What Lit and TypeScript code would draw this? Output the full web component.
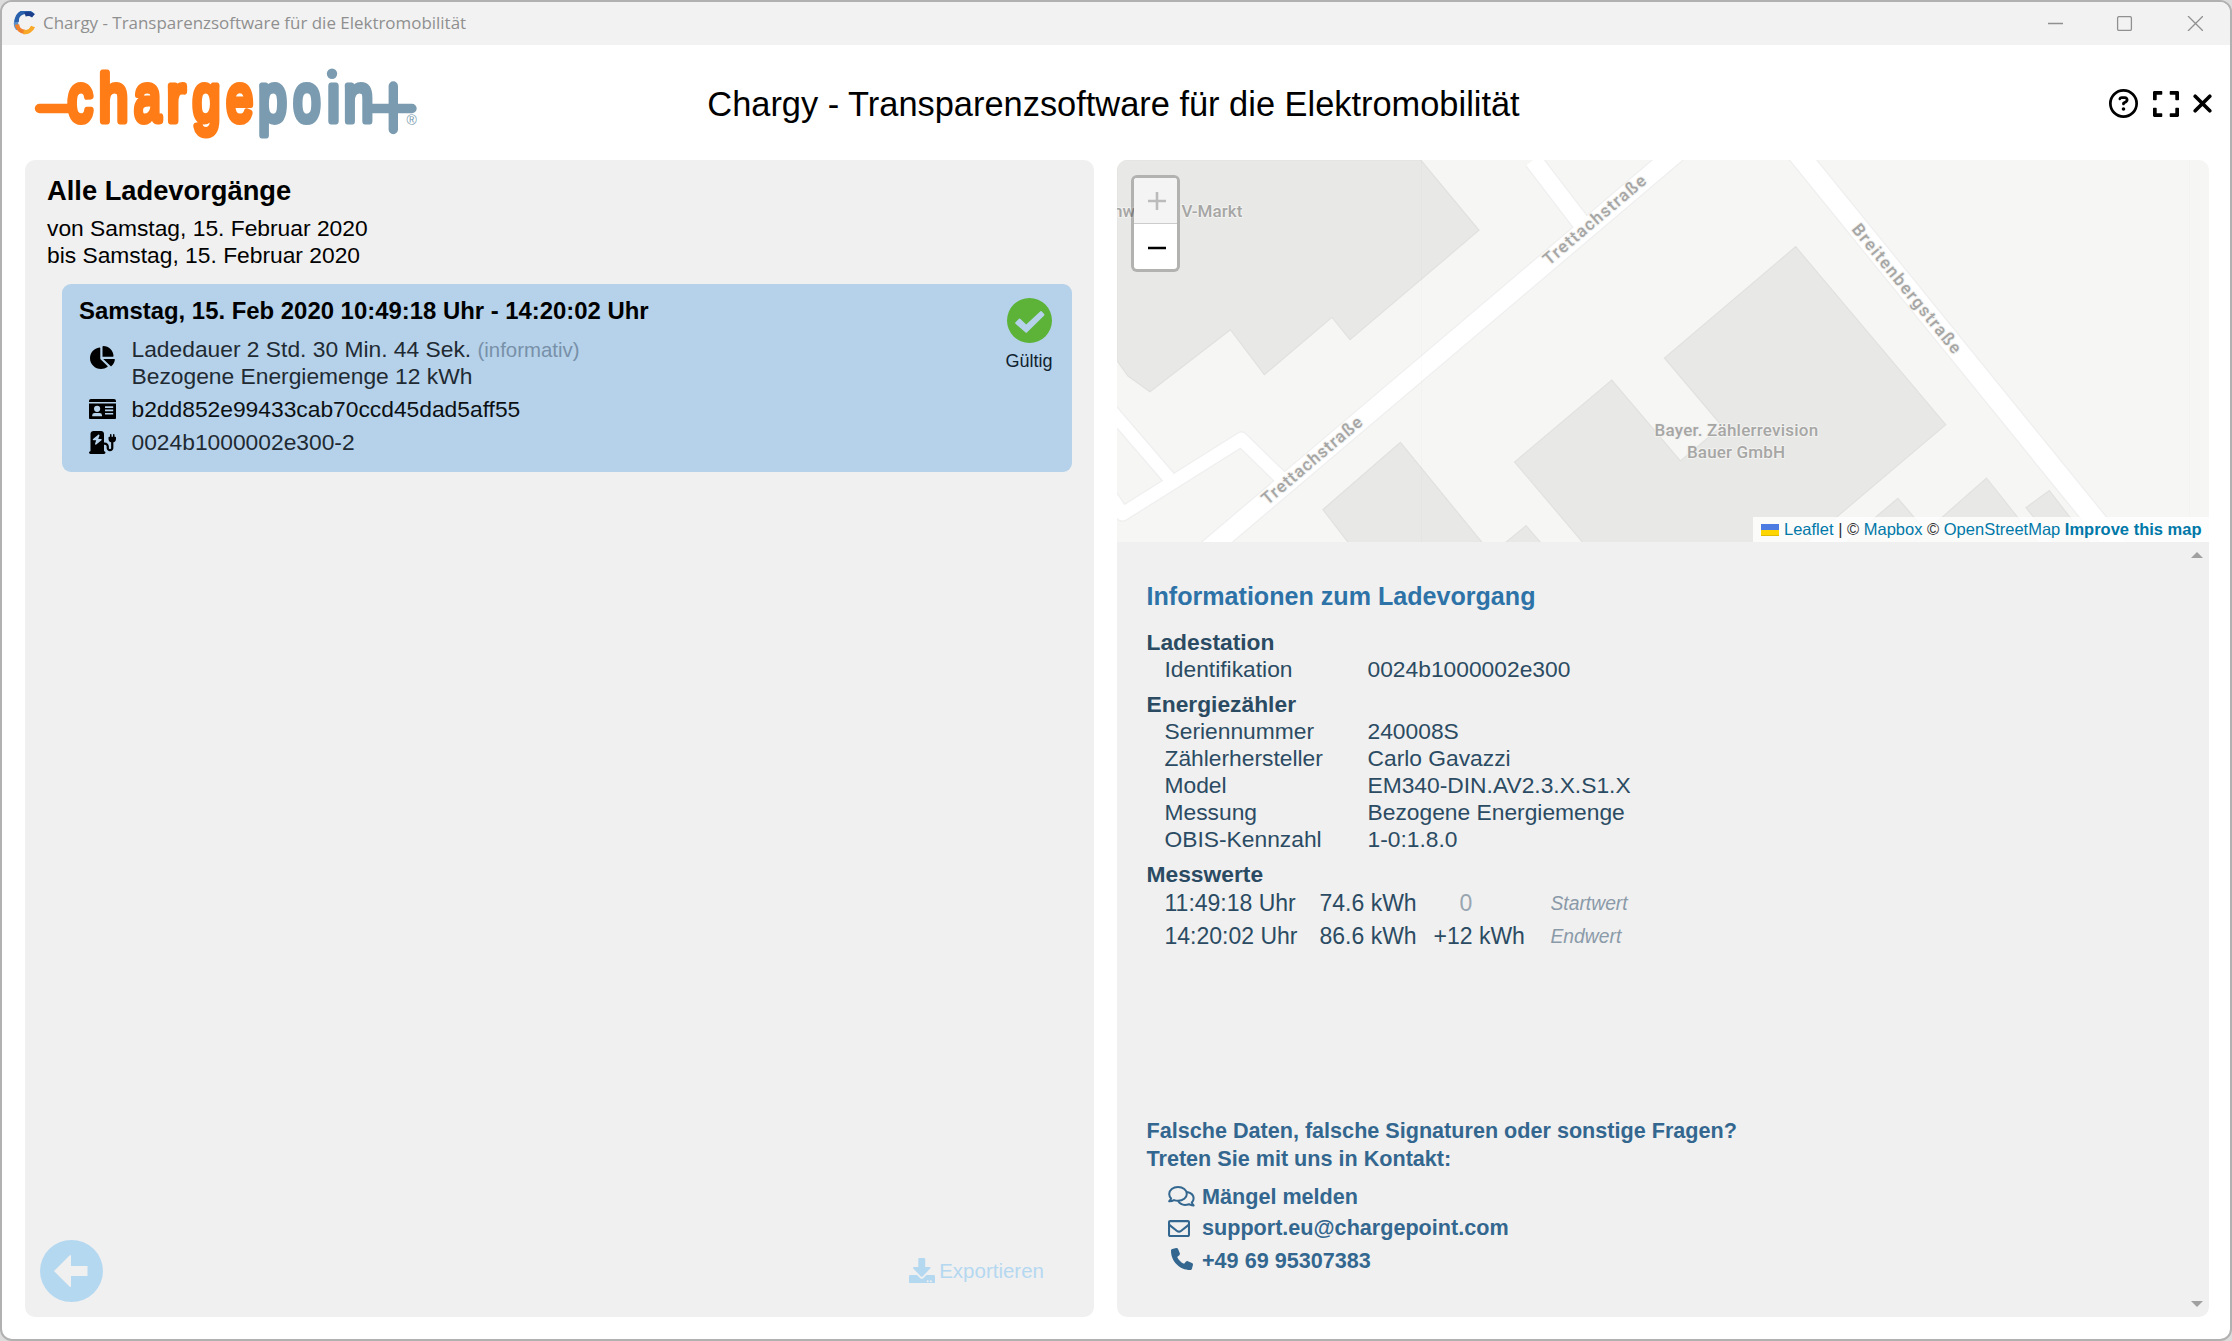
import { LitElement, html, svg, css } from "lit";
import { customElement } from "lit/decorators.js";

const icon = (cls: string, box: string, d: string) => html`
  <svg class=${cls} viewBox=${box} preserveAspectRatio="none" aria-hidden="true"><path d=${d} fill="currentColor" fill-rule="evenodd"></path></svg>`;

const ICONS = {
  help: "M464 256A208 208 0 1 0 48 256a208 208 0 1 0 416 0zM0 256a256 256 0 1 1 512 0A256 256 0 1 1 0 256zm169.8-90.7c7.9-22.3 29.1-37.3 52.8-37.3h58.3c34.9 0 63.1 28.3 63.1 63.1c0 22.6-12.1 43.5-31.7 54.8L280 264.4c-.2 13-10.9 23.6-24 23.6c-13.3 0-24-10.7-24-24V250.5c0-8.6 4.6-16.5 12.1-20.8l44.3-25.4c4.7-2.7 7.6-7.7 7.6-13.1c0-8.4-6.8-15.1-15.1-15.1H222.6c-3.4 0-6.4 2.1-7.5 5.3l-.4 1.2c-4.4 12.5-18.2 19-30.6 14.6s-19-18.2-14.6-30.6l.4-1.2zM224 352a32 32 0 1 1 64 0 32 32 0 1 1 -64 0z",
  expand: "M0 180V56c0-13.3 10.7-24 24-24h124c6.6 0 12 5.4 12 12v40c0 6.6-5.4 12-12 12H64v84c0 6.6-5.4 12-12 12H12c-6.6 0-12-5.4-12-12zM288 44v40c0 6.6 5.4 12 12 12h84v84c0 6.6 5.4 12 12 12h40c6.6 0 12-5.4 12-12V56c0-13.3-10.7-24-24-24H300c-6.6 0-12 5.4-12 12zm148 276h-40c-6.6 0-12 5.4-12 12v84h-84c-6.6 0-12 5.4-12 12v40c0 6.6 5.4 12 12 12h124c13.3 0 24-10.7 24-24V332c0-6.6-5.4-12-12-12zM160 468v-40c0-6.6-5.4-12-12-12H64v-84c0-6.6-5.4-12-12-12H12c-6.6 0-12 5.4-12 12v124c0 13.3 10.7 24 24 24h124c6.6 0 12-5.4 12-12z",
  pie: "M304 240V16.6c0-9 7-16.6 16-16.6C443.7 0 544 100.3 544 224c0 9-7.6 16-16.6 16H304zM32 272C32 150.7 122.1 50.3 239 34.3c9.2-1.3 17 6.1 17 15.4V288L412.5 444.5c6.7 6.7 6.2 17.7-1.5 23.1C371.8 495.6 323.8 512 272 512C139.5 512 32 404.6 32 272zm526.4 16c9.3 0 16.6 7.8 15.4 17c-7.7 55.9-34.6 105.6-73.9 142.3c-6 5.6-15.4 5.2-21.2-.7L320 288H558.4z",
  idCard: "M2 0H25Q27 0 27 2V3H0V2Q0 0 2 0ZM0 4.6H27V18.5Q27 20.5 25 20.5H2Q0 20.5 0 18.5ZM5 9.8a3.1 3.1 0 1 0 6.2 0a3.1 3.1 0 1 0-6.2 0ZM3.2 17.2H13V16.2Q13 14 10.5 14H5.7Q3.2 14 3.2 16.2ZM16 7.3H24.2V8.9H16ZM16 10.6H24.2V12.2H16ZM16 13.9H24.2V15.5H16Z",
  station: "M96 0C60.7 0 32 28.7 32 64V448c-17.7 0-32 14.3-32 32s14.3 32 32 32H320c17.7 0 32-14.3 32-32s-14.3-32-32-32V304h16c22.1 0 40 17.9 40 40v32c0 39.8 32.2 72 72 72s72-32.2 72-72V252.3c32.5-10.2 56-40.5 56-76.3V144c0-8.8-7.2-16-16-16H544V80c0-8.8-7.2-16-16-16s-16 7.2-16 16v48H480V80c0-8.8-7.2-16-16-16s-16 7.2-16 16v48H432c-8.8 0-16 7.2-16 16v32c0 35.8 23.5 66.1 56 76.3V376c0 13.3-10.7 24-24 24s-24-10.7-24-24V344c0-48.6-39.4-88-88-88H320V64c0-35.3-28.7-64-64-64H96zM216.9 82.7c6 4 8.5 11.5 6.3 18.3l-25 74.9H256c6.7 0 12.7 4.2 15 10.4s.5 13.3-4.6 17.7l-112 96c-5.5 4.7-13.4 5.1-19.3 1.1s-8.5-11.5-6.3-18.3l25-74.9H96c-6.7 0-12.7-4.2-15-10.4s-.5-13.3 4.6-17.7l112-96c5.5-4.7 13.4-5.1 19.3-1.1z",
  mail: "M464 64H48C21.49 64 0 85.49 0 112v288c0 26.51 21.49 48 48 48h416c26.51 0 48-21.49 48-48V112c0-26.51-21.49-48-48-48zm0 48v40.805c-22.422 18.259-58.168 46.651-134.587 106.49-16.841 13.247-50.201 45.072-73.413 44.701-23.208.375-56.579-31.459-73.413-44.701C106.18 199.465 70.425 171.067 48 152.805V112h416zM48 400V214.398c22.914 18.251 55.409 43.862 104.938 82.646 21.857 17.205 60.134 55.186 103.062 54.955 42.717.231 80.509-37.199 103.053-54.947 49.528-38.783 82.032-64.401 104.947-82.653V400H48z",
  phone: "M164.9 24.6c-7.7-18.6-28-28.5-47.4-23.2l-88 24C12.1 30.2 0 46 0 64C0 311.4 200.6 512 448 512c18 0 33.8-12.1 38.6-29.5l24-88c5.3-19.4-4.6-39.7-23.2-47.4l-96-40c-16.3-6.8-35.2-2.1-46.3 11.6L304.7 368C234.3 334.7 177.3 277.7 144 207.3L193.3 167c13.7-11.2 18.4-30 11.6-46.3l-40-96z",
  back: "M0 31.5a31.5 31 0 1 0 63 0a31.5 31 0 1 0-63 0ZM14 31.5L29.5 16Q31 14.8 31 17V26.5H47.5V36.5H31V46Q31 48.5 29.5 47Z",
  download: "M9.3 1Q9.3 0 10.3 0H15.2Q16.2 0 16.2 1V9H20.6Q22.2 9.2 21.2 10.6L13.6 18.4Q12.8 19 12 18.4L4.3 10.6Q3.3 9.2 5 9H9.3ZM1.3 17H8L11.2 20.2Q12.8 21.4 14.3 20.2L17.5 17H24.6Q26 17 26 18.4V24.2Q26 25.6 24.6 25.6H1.3Q0 25.6 0 24.2V18.4Q0 17 1.3 17ZM17.7 23.2a1 1 0 1 0 2 0a1 1 0 1 0-2 0ZM20.9 23.2a1 1 0 1 0 2 0a1 1 0 1 0-2 0Z",
  check: "M0 22.5a22.5 22.5 0 1 0 45 0a22.5 22.5 0 1 0-45 0ZM8.3 24.5L12 20.8Q12.6 20.4 13.2 20.8L19.2 26.6L33.4 13.2Q34 12.8 34.6 13.2L37.2 16Q37.6 16.8 37.2 17.4L19.9 34.6Q19.2 35.2 18.6 34.6L8.3 25.6Q7.9 25 8.3 24.5Z",
};

const BUILDINGS = [
  "1117,160 1420.7,160 1479,230.3 1350,339.7 1332,317.3 1264.3,374.7 1230.4,329.7 1150,391.7 1128,376 1117,360.7",
  "1400.4,442.3 1482.5,543 1348.6,543 1322.9,509.7",
  "1505,543 1526,525.7 1541,543",
  "1795.7,246.7 1945.7,424.7 1806,543 1583.2,543 1514.6,462 1611.8,380 1680.4,461 1722,426 1664.4,358",
  "1845,543 1897.9,498.3 1936,543",
  "1913,543 1986.5,478 2038,543",
  "2049.3,490.7 2090,543 2055,543 2026,507.7",
];

const ROADS = [
  { d: "M1533 160L1585 228", w: 17 },
  { d: "M1107 406L1169 478", w: 12.5 },
  { d: "M1105 488L1122.5 514L1241.4 439.3L1283 480", w: 13 },
  { d: "M1205.7 551.7L1679.5 150", w: 18.8 },
  { d: "M1795 150L2121 551.7", w: 20 },
];

// Letter, left and right ink edges in the logo, left and right ink edges in font units.
const WORD: [string, number, number, number, number][] = [
  ["c", 67, 94.5, 80, 1005],
  ["h", 99.7, 127.3, 135, 1003],
  ["a", 133.5, 161.3, 74, 1052],
  ["r", 167.7, 188.8, 133, 710],
  ["g", 191.7, 219.3, 66, 1000],
  ["e", 225.7, 253.3, 75, 1055],
  ["p", 259.2, 287.3, 135, 1067],
  ["o", 292.7, 321.3, 68, 1071],
  ["ı", 326.8, 337.2, 136, 316],
  ["n", 344.7, 372.3, 135, 1002],
];

@customElement("charge-logo")
class ChargeLogo extends LitElement {
  static styles = css`
    :host { display: block; }
    svg { display: block; width: 400px; height: 110px; overflow: visible; }
    .word { font: 67px "Liberation Sans", Arial, sans-serif; stroke-width: 7; stroke-linejoin: round; }
    .orange { fill: #ff7c16; stroke: #ff7c16; }
    .blue { fill: #7b9cb0; stroke: #7b9cb0; }
    .bar { stroke-width: 9.4; stroke-linecap: round; }
    .reg { font: 14px "Liberation Sans", Arial, sans-serif; fill: #7b9cb0; }
  `;
  render() {
    const unit = 67 / 2048;
    const stroke = 7;
    return html`<svg viewBox="30 50 400 110" role="img" aria-label="chargepoint">
      <path class="bar orange" d="M39.5 108.5H70"></path>
      ${WORD.map(([ch, x0, x1, min, max], i) => {
        const sx = (x1 - x0) / ((max - min) * unit + stroke);
        const tx = x0 + (stroke / 2 - min * unit) * sx;
        return svg`<text class="word ${i < 6 ? "orange" : "blue"}" transform="translate(${tx} 121.300) scale(${sx} 1)">${ch}</text>`;
      })}
      <circle cx="332" cy="73.8" r="5.2" fill="#7b9cb0"></circle>
      <path class="bar blue" fill="none" d="M370 108.5H412M393.3 86V129.5"></path>
      <text class="reg" x="406.5" y="124.5">®</text>
    </svg>`;
  }
}

@customElement("station-map")
class StationMap extends LitElement {
  static styles = css`
    :host { display: block; position: relative; height: 382px; overflow: hidden; border-radius: 10px 10px 0 0; background: #f6f6f4; }
    .canvas { display: block; width: 1092px; height: 382px; }
    .building { fill: #e8e8e6; stroke: #e1e1df; stroke-width: 1.2; }
    .edge { fill: none; stroke: #eeefee; stroke-linejoin: round; }
    .road { fill: none; stroke: #fff; stroke-linejoin: round; }
    .label { font: 500 17px Roboto, sans-serif; fill: #a6a6a5; stroke: #f2f2f0; stroke-width: 2; paint-order: stroke; stroke-linejoin: round; }
    .seam { stroke: #000; stroke-opacity: 0.012; }
    .zoom { position: absolute; left: 14px; top: 15px; width: 43px; height: 91px; border: 3px solid rgba(0, 0, 0, 0.23); border-radius: 6px; background: #fff; background-clip: padding-box; display: flex; flex-direction: column; overflow: hidden; }
    .zoom svg { display: block; width: 43px; height: 45px; }
    .zoom .off { background: #f4f4f4; border-bottom: 1px solid #ccc; color: #bbb; }
    .credit { position: absolute; right: 0; bottom: 0; height: 25px; width: 448px; padding-left: 8px; display: flex; align-items: center; background: rgba(255, 255, 255, 0.8); font: 16.5px/25px "Liberation Sans", Arial, sans-serif; color: #333; }
    .credit a { color: #0078a8; }
    .credit b { font-weight: 700; }
    .flag { width: 18px; height: 12px; margin-right: 5px; flex: none; }
    .sources { white-space: nowrap; }
  `;
  render() {
    return html`
      <svg class="canvas" viewBox="1117 160 1092 382">
        ${BUILDINGS.map((p) => svg`<polygon class="building" points=${p}></polygon>`)}
        ${ROADS.map((r) => svg`<path class="edge" d=${r.d} stroke-width=${r.w + 2.5}></path>`)}
        ${ROADS.map((r) => svg`<path class="road" d=${r.d} stroke-width=${r.w}></path>`)}
        <path class="seam" d="M1421.5 160V542M2189.5 160V542"></path>
        <text class="label" x="1113" y="217.3">nw</text>
        <text class="label" x="1181.4" y="217.3" textLength="61">V-Markt</text>
        <text class="label" x="1654.6" y="436" textLength="163.5">Bayer. Zählerrevision</text>
        <text class="label" x="1687" y="458" textLength="98">Bauer GmbH</text>
        <text class="label" transform="translate(1549 266) rotate(-40.3)" textLength="129">Trettachstraße</text>
        <text class="label" transform="translate(1267.5 505.5) rotate(-40.3)" textLength="126">Trettachstraße</text>
        <text class="label" transform="translate(1851 229.5) rotate(50.7)" textLength="162">Breitenbergstraße</text>
      </svg>
      <div class="zoom">
        <svg class="off" viewBox="0 0 43 45"><path d="M14 23H32M23 14V32" stroke="currentColor" stroke-width="2.6"></path></svg>
        <svg viewBox="0 0 43 45"><path d="M14 24H32" stroke="#000" stroke-width="2.4"></path></svg>
      </div>
      <div class="credit"><svg class="flag" viewBox="0 0 18 12"><path fill="#4c7be1" d="M0 0h18v6H0z"></path><path fill="#ffd500" d="M0 6h18v5H0z"></path><path fill="#e0bc00" d="M0 11h18v1H0z"></path></svg><span class="sources"><a>Leaflet</a> | © <a>Mapbox</a> © <a>OpenStreetMap</a> <a><b>Improve this map</b></a></span></div>`;
  }
}

@customElement("app-root")
class AppRoot extends LitElement {
  static styles = css`
    :host { display: block; width: 2232px; height: 1341px; background: #dcdcdc; font: 22.8px/27px "Liberation Sans", Arial, sans-serif; color: #000; }
    * { box-sizing: border-box; }
    .window { width: 2232px; height: 1341px; border: 2px solid #b1b1b1; border-radius: 12px; background: #fff; overflow: hidden; display: flex; flex-direction: column; }
    .titlebar { height: 43px; background: #f2f2f2; display: flex; align-items: center; padding: 0 27px 2px 11px; color: #8f8f8f; }
    .app-icon { width: 24px; height: 24px; margin-right: 6px; }
    .caption { font: 16.95px/40px "Open Sans", sans-serif; flex: 1; white-space: nowrap; }
    .win-buttons { width: 155px; height: 15px; display: block; margin-top: 1px; }
    .header { height: 115px; display: flex; align-items: center; padding: 0 18px 0 28px; justify-content: space-between; }
    .brand { width: 485px; padding-top: 5px; }
    .title { font-size: 34.4px; line-height: 40px; white-space: nowrap; padding-top: 3px; }
    .tools { width: 500px; display: flex; justify-content: flex-end; align-items: center; padding-top: 2px; }
    .help { width: 29px; height: 29px; }
    .expand { width: 26px; height: 26px; margin-left: 15px; }
    .close { width: 19px; height: 19px; margin-left: 14px; }
    .panels { display: grid; grid-template-columns: 1069px 1092px; column-gap: 23px; padding-left: 23px; height: 1157px; }
    .left { background: #f0f0f0; border-radius: 10px; padding: 14px 22px 15px 15px; display: flex; flex-direction: column; }
    .left h1 { margin: 0 0 7px 7px; font-size: 27.3px; line-height: 34px; }
    .range { margin-left: 7px; }
    .card { margin: 15px 0 0 22px; height: 188px; border-radius: 9px; background: #b5d2ea; display: flex; padding: 14px 18px 0 17px; }
    .facts { flex: 1; margin-top: -1px; }
    .card h2 { margin: 0 0 12px; font-size: 23.9px; line-height: 27px; }
    .row { display: grid; grid-template-columns: 42.5px 1fr; padding-left: 10px; align-items: center; margin-bottom: 6px; color: #1f2a33; white-space: nowrap; }
    .row.dark { color: #0c1013; }
    .row svg { color: #000; }
    .pie { width: 25px; height: 23px; margin: -12px 0 0 1px; }
    .card-icon { width: 27px; height: 20.5px; margin-top: -1px; }
    .station { width: 27px; height: 23px; margin-top: -1px; }
    .note { font-size: 20.4px; line-height: 1; color: #7890a8; }
    .status { width: 50px; text-align: center; font-size: 18px; line-height: 22px; color: #10222f; }
    .check { display: block; width: 45px; height: 45px; margin: 0 auto 7px 3px; color: #5cb338; }
    .actions { margin-top: auto; display: flex; justify-content: space-between; align-items: center; color: #b5d8f1; padding-right: 28px; }
    .back { width: 63px; height: 62px; }
    .export { display: flex; align-items: center; font-size: 20.5px; gap: 4px; padding-bottom: 1px; }
    .download { width: 26px; height: 25.6px; }
    .right { display: flex; flex-direction: column; }
    .info { flex: 1; display: grid; grid-template-columns: 1fr 26px; background: #f0f0f0; border-radius: 0 0 10px 10px; }
    .details { padding: 38px 0 43px 29.5px; display: flex; flex-direction: column; color: #2b4b63; }
    .details h2 { margin: 0 0 17px; font-size: 25.1px; line-height: 32px; color: #2d73a8; }
    .details h3 { margin: 0; font-size: 22.8px; line-height: 27px; }
    .pairs { display: grid; grid-template-columns: 203px 1fr; padding-left: 18px; margin-bottom: 8px; }
    .values { display: grid; grid-template-columns: 155px 96px 135px 1fr; row-gap: 6px; padding: 2px 0 0 18px; white-space: nowrap; font-size: 23px; }
    .delta { padding-left: 18px; }
    .zero { padding-left: 44px; color: #98a5b0; }
    .kind { font-style: italic; font-size: 19.3px; color: #8a9aa8; }
    .contact { margin-top: auto; color: #33678f; font-size: 21.6px; font-weight: 700; line-height: 28px; }
    .links { margin-top: 10px; padding-left: 21.5px; line-height: 27px; }
    .link { display: grid; grid-template-columns: 34px 1fr; align-items: center; margin-bottom: 6px; }
    .link:first-child { margin-bottom: 4px; }
    .link:last-child { margin-bottom: 0; }
    .talk { width: 27px; height: 21px; }
    .mail { width: 22px; height: 17px; margin-top: 2px; }
    .phone { width: 22px; height: 22px; margin: -4px 0 0 3px; }
    .rail { display: flex; flex-direction: column; justify-content: space-between; align-items: center; padding: 10px 0 10px 1px; }
    .rail svg { width: 12px; height: 6px; fill: #a0a0a0; }
  `;

  render() {
    return html`
      <div class="window">
        <div class="titlebar">
          <svg class="app-icon" viewBox="0 0 24 24" fill="none" stroke-width="4.4">
            <path d="M5 18A9 9 0 0 1 4 8.5" stroke="#5b8fc8"></path>
            <path d="M3.8 11A9 9 0 0 1 20 4.6" stroke="#2a62ad"></path>
            <path d="M12 3.4A9 9 0 0 1 20.4 4.8" stroke="#1c3f8c"></path>
            <path d="M4 13.5A8.5 8.5 0 0 0 12 21" stroke="#f0812b"></path>
            <path d="M10.5 21A9 9 0 0 0 20 15.5" stroke="#f9a928"></path>
          </svg>
          <span class="caption">Chargy - Transparenzsoftware für die Elektromobilität</span>
          <svg class="win-buttons" viewBox="0 0 155 15" fill="none" stroke="#909090" stroke-width="1.3"><path d="M0 7.5H15M140 0L155 15M155 0L140 15"></path><rect x="69.6" y="0.6" width="13.8" height="13.8" rx="1.5"></rect></svg>
        </div>
        <div class="header">
          <charge-logo class="brand"></charge-logo>
          <div class="title">Chargy - Transparenzsoftware für die Elektromobilität</div>
          <div class="tools">
            ${icon("help", "0 0 512 512", ICONS.help)}
            ${icon("expand", "0 32 448 448", ICONS.expand)}
            <svg class="close" viewBox="0 0 19 19"><path d="M2.2 2.2L16.8 16.8M16.8 2.2L2.2 16.8" stroke="#000" stroke-width="3.6" stroke-linecap="round"></path></svg>
          </div>
        </div>
        <div class="panels">
          <div class="left">
            <h1>Alle Ladevorgänge</h1>
            <div class="range">von Samstag, 15. Februar 2020<br>bis Samstag, 15. Februar 2020</div>
            <div class="card">
              <div class="facts">
                <h2>Samstag, 15. Feb 2020 10:49:18 Uhr - 14:20:02 Uhr</h2>
                <div class="row">${icon("pie", "32 0 544 512", ICONS.pie)}<div>Ladedauer 2 Std. 30 Min. 44 Sek. <span class="note">(informativ)</span><br>Bezogene Energiemenge 12 kWh</div></div>
                <div class="row dark">${icon("card-icon", "0 0 27 20.5", ICONS.idCard)}<div>b2dd852e99433cab70ccd45dad5aff55</div></div>
                <div class="row">${icon("station", "0 0 576 512", ICONS.station)}<div>0024b1000002e300-2</div></div>
              </div>
              <div class="status">${icon("check", "0 0 45 45", ICONS.check)}Gültig</div>
            </div>
            <div class="actions">
              ${icon("back", "0 0.5 63 62", ICONS.back)}
              <div class="export">${icon("download", "0 0 26 25.6", ICONS.download)}<span>Exportieren</span></div>
            </div>
          </div>
          <div class="right">
            <station-map></station-map>
            <div class="info">
              <div class="details">
                <h2>Informationen zum Ladevorgang</h2>
                <h3>Ladestation</h3>
                <div class="pairs"><span>Identifikation</span><span>0024b1000002e300</span></div>
                <h3>Energiezähler</h3>
                <div class="pairs">
                  <span>Seriennummer</span><span>240008S</span>
                  <span>Zählerhersteller</span><span>Carlo Gavazzi</span>
                  <span>Model</span><span>EM340-DIN.AV2.3.X.S1.X</span>
                  <span>Messung</span><span>Bezogene Energiemenge</span>
                  <span>OBIS-Kennzahl</span><span>1-0:1.8.0</span>
                </div>
                <h3>Messwerte</h3>
                <div class="values">
                  <span>11:49:18 Uhr</span><span>74.6 kWh</span><span class="zero">0</span><span class="kind">Startwert</span>
                  <span>14:20:02 Uhr</span><span>86.6 kWh</span><span class="delta">+12 kWh</span><span class="kind">Endwert</span>
                </div>
                <div class="contact">
                  Falsche Daten, falsche Signaturen oder sonstige Fragen?<br>Treten Sie mit uns in Kontakt:
                  <div class="links">
                    <div class="link"><svg class="talk" viewBox="0 0 27 21" fill="none" stroke="currentColor" stroke-width="2" stroke-linejoin="round"><path d="M10 1C5 1 1.2 4.2 1.2 8c0 1.700.7 3.200 1.900 4.400-.3 1-1 2-1.900 2.900 2 .1 3.500-.4 4.800-1.200 1.200.5 2.500.7 4 .7 5 0 8.800-3 8.800-6.900S15 1 10 1Z"></path><path d="M19 6c3.900.8 6.600 3.300 6.600 6.400 0 1.600-.7 3-1.800 4.100.3 1 .9 1.900 1.800 2.900-1.900.1-3.300-.4-4.600-1.200-4.300 1.400-8.700.2-10.900-3.200"></path></svg><span>Mängel melden</span></div>
                    <div class="link">${icon("mail", "0 64 512 384", ICONS.mail)}<span>support.eu@chargepoint.com</span></div>
                    <div class="link">${icon("phone", "0 0 512 512", ICONS.phone)}<span>+49 69 95307383</span></div>
                  </div>
                </div>
              </div>
              <div class="rail"><svg viewBox="0 0 12 6"><path d="M0 6L6 0L12 6Z"></path></svg><svg viewBox="0 0 12 6"><path d="M0 0L6 6L12 0Z"></path></svg></div>
            </div>
          </div>
        </div>
      </div>`;
  }
}
